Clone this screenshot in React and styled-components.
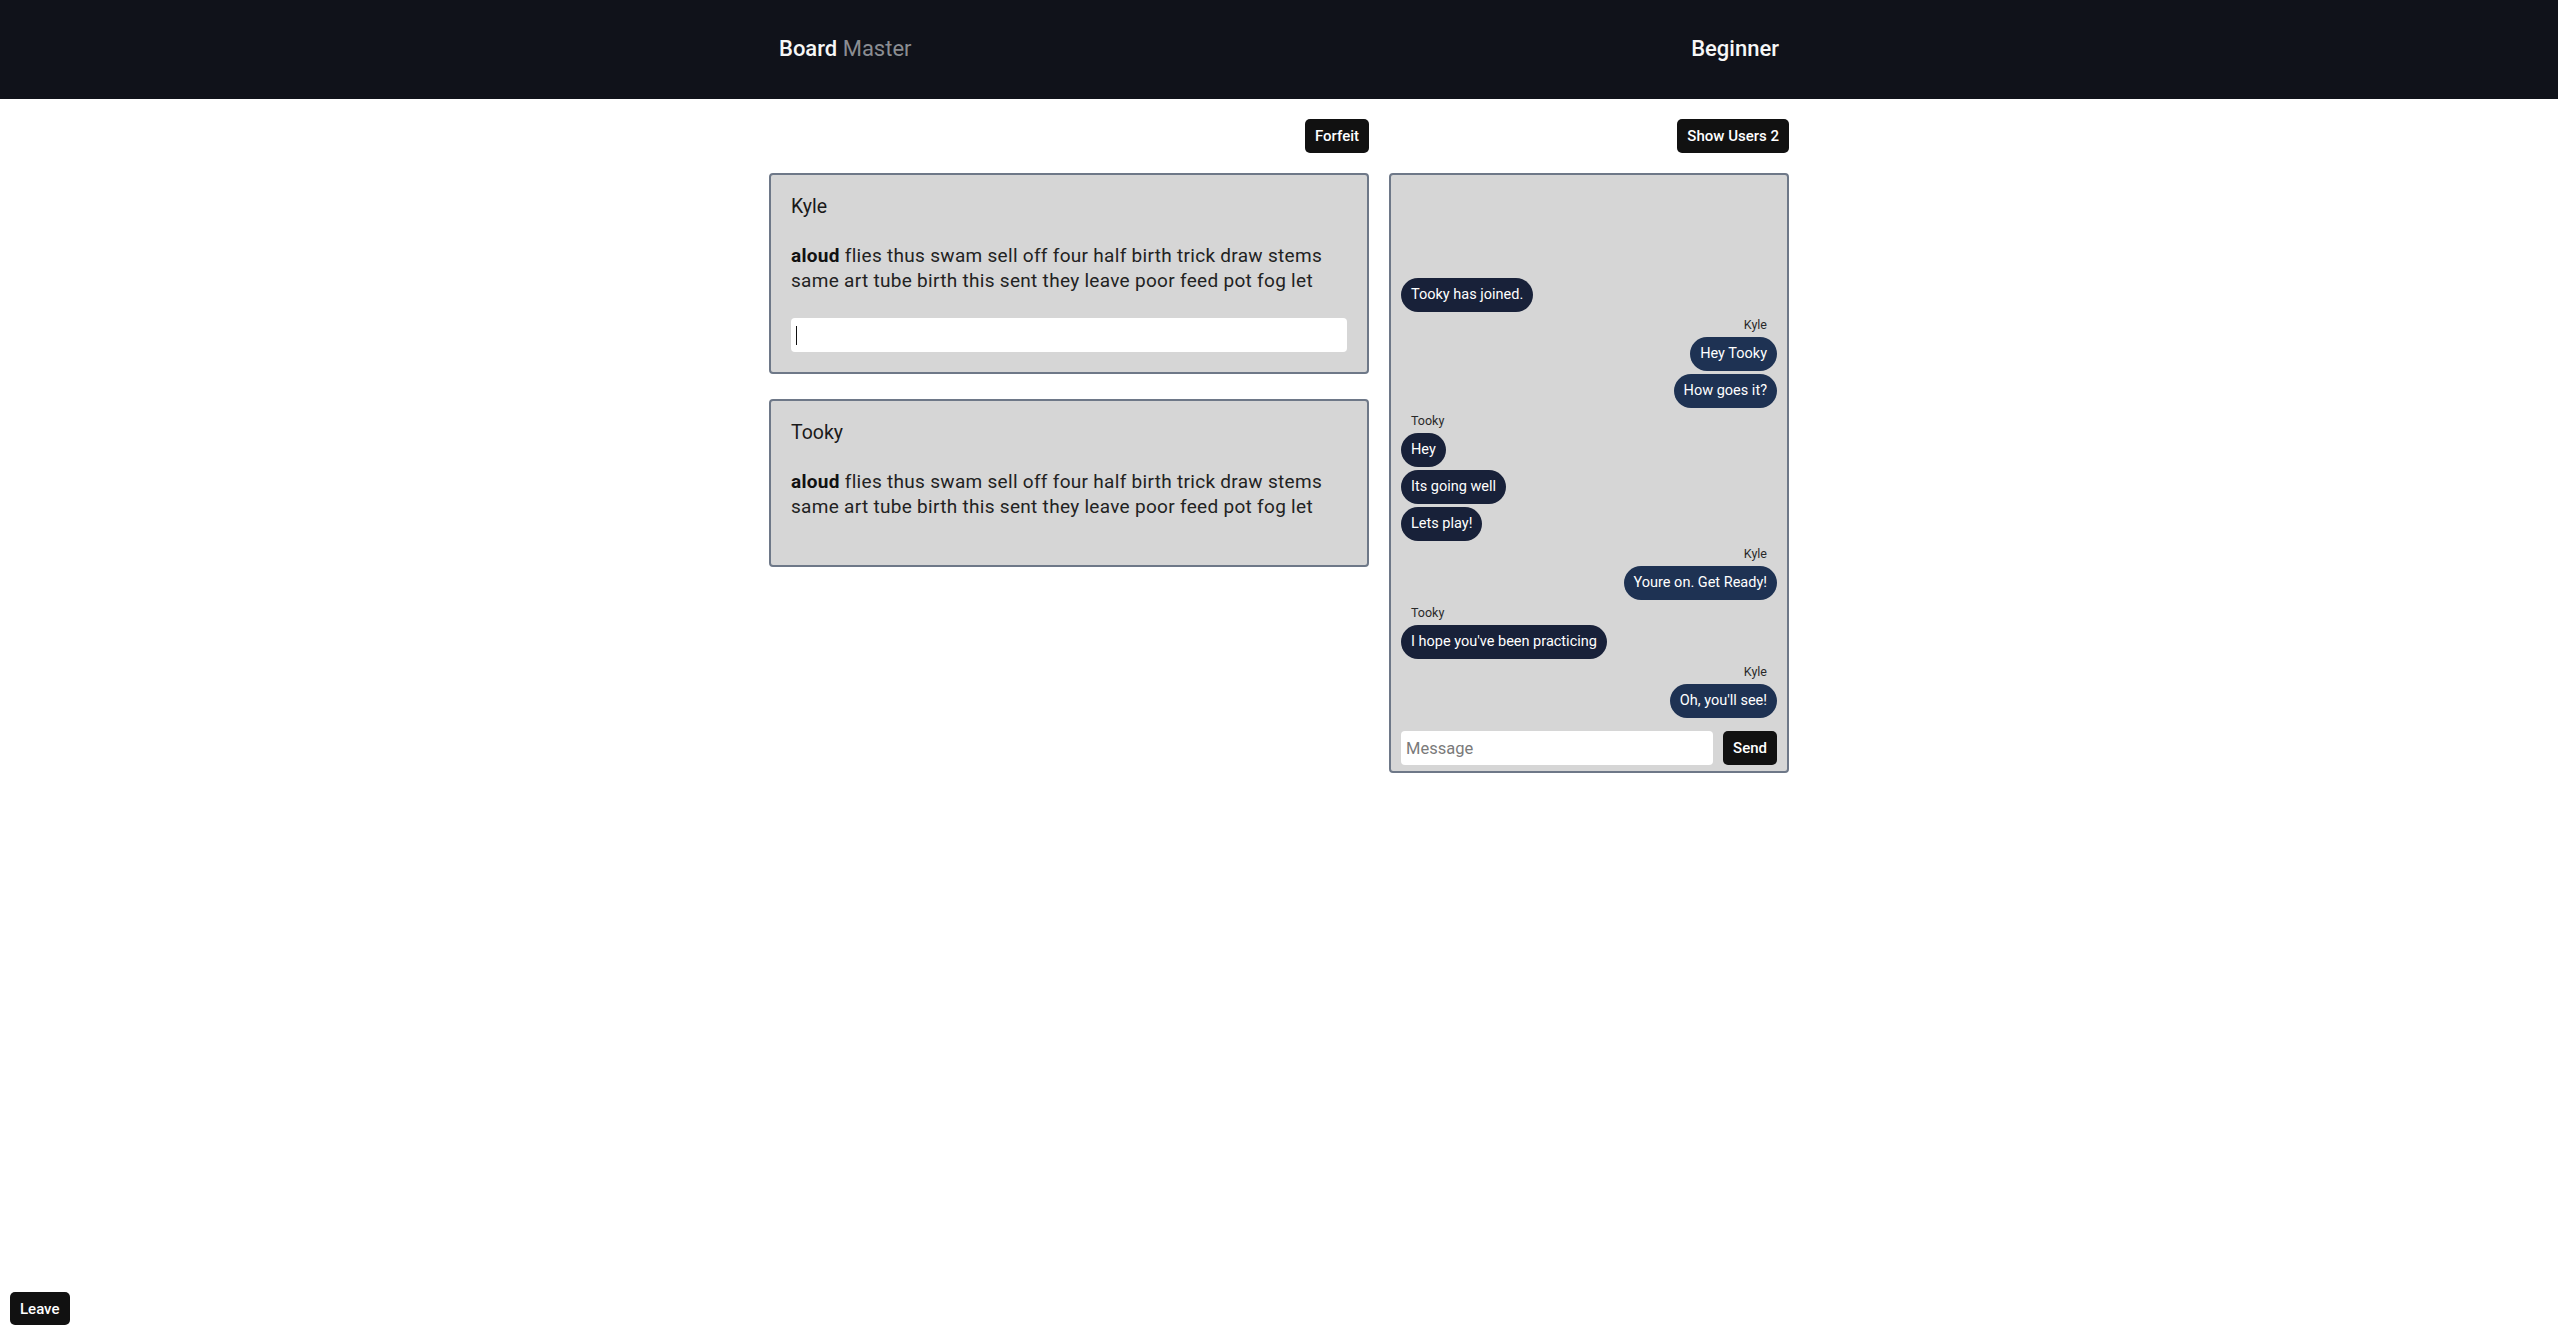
import React from 'react';
import styled, { createGlobalStyle } from 'styled-components';

const GlobalStyle = createGlobalStyle`
  body {
    margin: 0;
    background: #ffffff;
    font-family: Roboto, "Liberation Sans", sans-serif;
    color: #1a1a1a;
  }
  * {
    box-sizing: border-box;
  }
`;

const messages = [
  { id: 1, system: true, text: 'Tooky has joined.' },
  { id: 2, from: 'Kyle', self: true, text: 'Hey Tooky', showName: true },
  { id: 3, from: 'Kyle', self: true, text: 'How goes it?' },
  { id: 4, from: 'Tooky', text: 'Hey', showName: true },
  { id: 5, from: 'Tooky', text: 'Its going well' },
  { id: 6, from: 'Tooky', text: 'Lets play!' },
  { id: 7, from: 'Kyle', self: true, text: 'Youre on. Get Ready!', showName: true },
  { id: 8, from: 'Tooky', text: "I hope you've been practicing", showName: true },
  { id: 9, from: 'Kyle', self: true, text: "Oh, you'll see!", showName: true },
];

const players = [
  { name: 'Kyle', canType: true },
  { name: 'Tooky', canType: false },
];

const words = 'flies thus swam sell off four half birth trick draw stems same art tube birth this sent they leave poor feed pot fog let';

function App() {
  return (
    <>
      <GlobalStyle />
      <Header>
        <HeaderInner>
          <Brand>
            Board <span>Master</span>
          </Brand>
          <Level>Beginner</Level>
        </HeaderInner>
      </Header>

      <Main>
        <Column>
          <ActionRow>
            <DarkButton>Forfeit</DarkButton>
          </ActionRow>
          <Cards>
            {players.map((p) => (
              <PlayerCard key={p.name}>
                <PlayerName>{p.name}</PlayerName>
                <Prompt $last={!p.canType}>
                  <strong>aloud</strong> {words}
                </Prompt>
                {p.canType && (
                  <TypeField>
                    <TypeInput />
                  </TypeField>
                )}
              </PlayerCard>
            ))}
          </Cards>
        </Column>

        <Column>
          <ActionRow>
            <DarkButton>Show Users 2</DarkButton>
          </ActionRow>
          <ChatBox>
            <MessageList>
              {messages.map((m) => (
                <React.Fragment key={m.id}>
                  {m.showName && <Sender $self={m.self}>{m.from}</Sender>}
                  <Bubble $self={m.self}>{m.text}</Bubble>
                </React.Fragment>
              ))}
            </MessageList>
            <ChatForm onSubmit={(e) => e.preventDefault()}>
              <MessageInput placeholder="Message" />
              <DarkButton type="submit">Send</DarkButton>
            </ChatForm>
          </ChatBox>
        </Column>
      </Main>

      <LeaveButton>Leave</LeaveButton>
    </>
  );
}

const Header = styled.header`
  height: 99px;
  background-color: #10121a;
  display: flex;
  align-items: center;
`;

const HeaderInner = styled.div`
  width: 1020px;
  margin: 0 auto;
  padding: 0 10px;
  display: flex;
  justify-content: space-between;
  align-items: center;
`;

const Brand = styled.div`
  font-size: 22px;
  font-weight: 500;
  color: #f7f7f7;
  margin-top: -2px;

  span {
    font-weight: 400;
    color: #8b8d92;
  }
`;

const Level = styled.div`
  font-size: 22px;
  font-weight: 500;
  color: #f7f7f7;
  margin-top: -2px;
`;

const Main = styled.main`
  width: 1020px;
  margin: 20px auto 0;
  display: grid;
  grid-template-columns: 600px 400px;
  gap: 20px;
  align-items: start;
`;

const Column = styled.div`
  display: flex;
  flex-direction: column;
  gap: 20px;
`;

const ActionRow = styled.div`
  display: flex;
  justify-content: flex-end;
`;

const DarkButton = styled.button`
  height: 34px;
  padding: 0 10px;
  border: none;
  border-radius: 5px;
  background-color: #111111;
  color: #ffffff;
  font-family: Roboto, "Liberation Sans", sans-serif;
  font-size: 15px;
  font-weight: 500;
  cursor: pointer;
  flex-shrink: 0;
`;

const Cards = styled.div`
  display: flex;
  flex-direction: column;
  gap: 25px;
`;

const PlayerCard = styled.section`
  background-color: #d6d6d6;
  border: 2px solid #6e7888;
  border-radius: 4px;
  padding: 20px 20px 20px;
`;

const PlayerName = styled.div`
  font-size: 19.5px;
  line-height: 24px;
  color: #1a1a1a;
  margin-bottom: 24px;
`;

const Prompt = styled.p`
  margin: 0 0 ${(p) => (p.$last ? '26px' : '25px')};
  font-size: 19px;
  line-height: 25px;
  letter-spacing: 0.3px;
  color: #222222;

  strong {
    font-weight: 700;
    color: #111111;
  }
`;

const TypeField = styled.div`
  position: relative;

  &::after {
    content: '';
    position: absolute;
    left: 5px;
    top: 8px;
    width: 1px;
    height: 19px;
    background: #111111;
  }
`;

const TypeInput = styled.input`
  display: block;
  width: 100%;
  height: 34px;
  border: none;
  border-radius: 4px;
  background: #ffffff;
  padding: 0 5px;
  font-family: Roboto, "Liberation Sans", sans-serif;
  font-size: 18px;
  outline: none;
`;

const ChatBox = styled.div`
  height: 600px;
  background-color: #d6d6d6;
  border: 2px solid #6e7888;
  border-radius: 4px;
  padding: 10px 10px 6px;
  display: flex;
  flex-direction: column;
`;

const MessageList = styled.div`
  flex: 1;
  display: flex;
  flex-direction: column;
  justify-content: flex-end;
  gap: 3px;
  overflow: hidden;
`;

const Sender = styled.div`
  align-self: ${(p) => (p.$self ? 'flex-end' : 'flex-start')};
  padding: 0 10px;
  font-size: 12.5px;
  line-height: 19px;
  color: #2a2a2a;
`;

const Bubble = styled.div`
  align-self: ${(p) => (p.$self ? 'flex-end' : 'flex-start')};
  background-color: ${(p) => (p.$self ? '#1e3253' : '#182139')};
  color: #ffffff;
  font-size: 14.5px;
  line-height: 18px;
  padding: 8px 10px;
  border-radius: 17px;
  white-space: nowrap;
`;

const ChatForm = styled.form`
  margin-top: 13px;
  display: flex;
  gap: 10px;
`;

const MessageInput = styled.input`
  flex: 1;
  min-width: 0;
  height: 34px;
  border: none;
  border-radius: 4px;
  background: #ffffff;
  padding: 0 5px;
  font-family: Roboto, "Liberation Sans", sans-serif;
  font-size: 16.5px;
  color: #222;
  outline: none;

  &::placeholder {
    color: #7a7a7a;
  }
`;

const LeaveButton = styled(DarkButton)`
  position: fixed;
  left: 10px;
  bottom: 11px;
  height: 33px;
`;

export default App;
